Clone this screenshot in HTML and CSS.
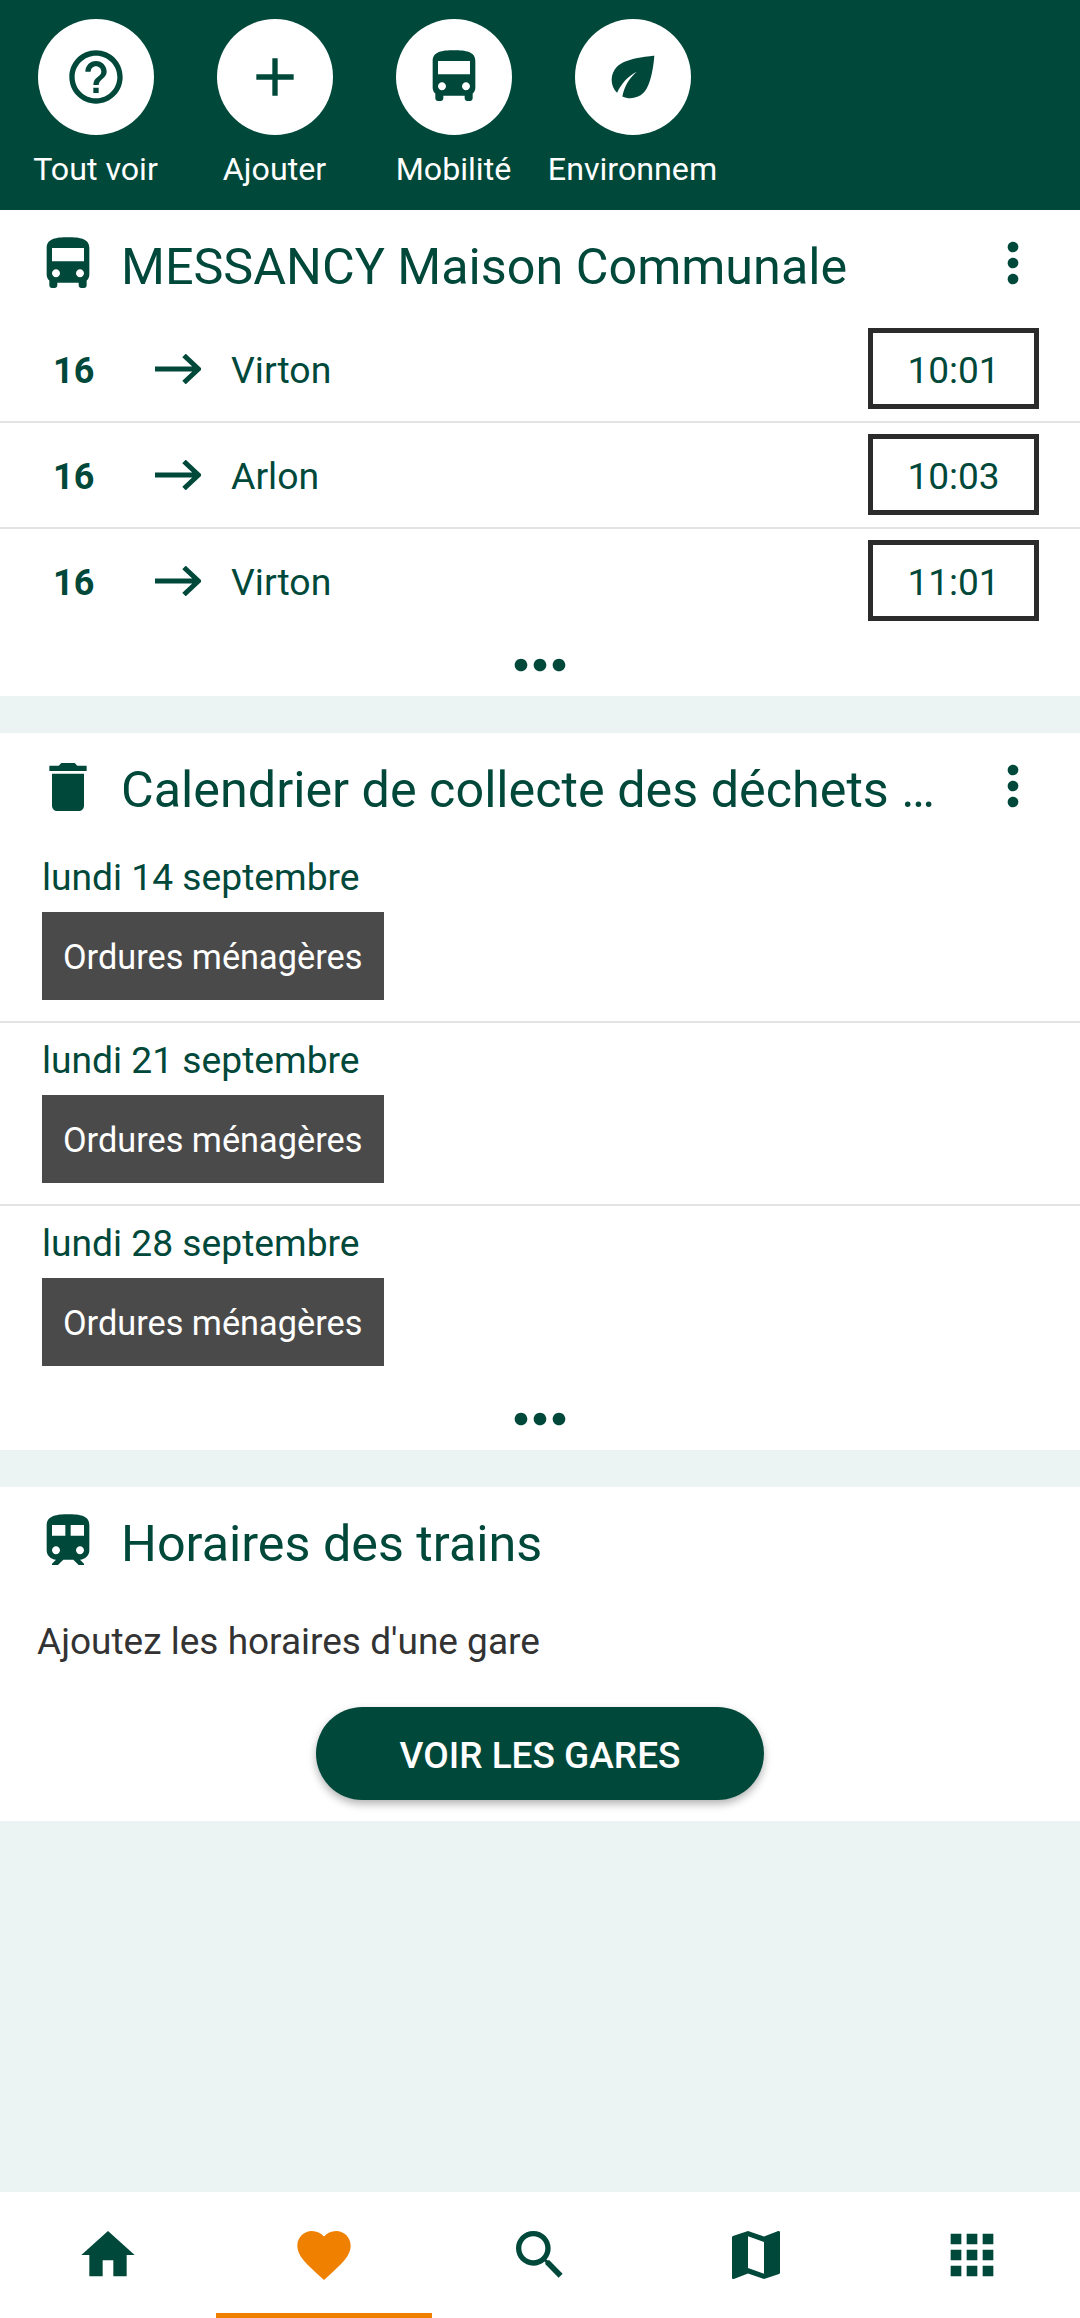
FILE: index.html
```html
<!DOCTYPE html>
<html lang="fr">
<head>
<meta charset="utf-8">
<title>Favoris</title>
<link rel="stylesheet" href="styles.css">
</head>
<body>
<div class="app">
  <header class="shortcuts">
    <div class="shortcut"><div class="circle"><svg class="icon" viewBox="0 0 24 24"><path d="M11 18h2v-2h-2v2zm1-16C6.48 2 2 6.48 2 12s4.48 10 10 10 10-4.48 10-10S17.52 2 12 2zm0 18c-4.41 0-8-3.59-8-8s3.59-8 8-8 8 3.59 8 8-3.59 8-8 8zm0-14c-2.21 0-4 1.79-4 4h2c0-1.1.9-2 2-2s2 .9 2 2c0 2-3 1.75-3 5h2c0-2.25 3-2.5 3-5 0-2.21-1.79-4-4-4z"/></svg></div><span class="shortcut-label">Tout voir</span></div>
    <div class="shortcut"><div class="circle"><svg class="icon" viewBox="0 0 24 24"><path d="M19 13h-6v6h-2v-6H5v-2h6V5h2v6h6v2z"/></svg></div><span class="shortcut-label">Ajouter</span></div>
    <div class="shortcut"><div class="circle"><svg class="icon" viewBox="0 0 24 24"><path d="M4 16c0 .88.39 1.67 1 2.22V20c0 .55.45 1 1 1h1c.55 0 1-.45 1-1v-1h8v1c0 .55.45 1 1 1h1c.55 0 1-.45 1-1v-1.78c.61-.55 1-1.34 1-2.22V6c0-3.5-3.58-4-8-4s-8 .5-8 4v10zm3.5 1c-.83 0-1.5-.67-1.5-1.5S6.67 14 7.5 14s1.5.67 1.5 1.5S8.33 17 7.5 17zm9 0c-.83 0-1.5-.67-1.5-1.5s.67-1.5 1.5-1.5 1.5.67 1.5 1.5-.67 1.5-1.5 1.5zm1.5-6H6V6h12v5z"/></svg></div><span class="shortcut-label">Mobilité</span></div>
    <div class="shortcut"><div class="circle"><svg class="icon" viewBox="0 0 24 24"><path d="M6.05 8.05c-2.73 2.73-2.73 7.15-.02 9.88 1.47-3.4 4.09-6.24 7.36-7.93-2.77 2.34-4.71 5.61-5.39 9.32 2.6 1.23 5.8.78 7.95-1.37C19.43 14.47 20 4 20 4S9.53 4.57 6.05 8.05z"/></svg></div><span class="shortcut-label">Environnem</span></div>
  </header>

  <main class="content">
    <section class="card">
      <div class="card-head">
        <svg class="icon" viewBox="0 0 24 24"><path d="M4 16c0 .88.39 1.67 1 2.22V20c0 .55.45 1 1 1h1c.55 0 1-.45 1-1v-1h8v1c0 .55.45 1 1 1h1c.55 0 1-.45 1-1v-1.78c.61-.55 1-1.34 1-2.22V6c0-3.5-3.58-4-8-4s-8 .5-8 4v10zm3.5 1c-.83 0-1.5-.67-1.5-1.5S6.67 14 7.5 14s1.5.67 1.5 1.5S8.33 17 7.5 17zm9 0c-.83 0-1.5-.67-1.5-1.5s.67-1.5 1.5-1.5 1.5.67 1.5 1.5-.67 1.5-1.5 1.5zm1.5-6H6V6h12v5z"/></svg>
        <h2 class="card-title">MESSANCY Maison Communale</h2>
        <svg class="icon menu" viewBox="0 0 24 24"><path d="M12 8c1.1 0 2-.9 2-2s-.9-2-2-2-2 .9-2 2 .9 2 2 2zm0 2c-1.1 0-2 .9-2 2s.9 2 2 2 2-.9 2-2-.9-2-2-2zm0 6c-1.1 0-2 .9-2 2s.9 2 2 2 2-.9 2-2-.9-2-2-2z"/></svg>
      </div>
      <div class="bus-row">
        <span class="line">16</span>
        <svg class="arrow" viewBox="0 0 46 30"><path d="M0 15H43M29 1.5L43.5 15L29 28.5"/></svg>
        <span class="dest">Virton</span>
        <span class="time">10:01</span>
      </div>
      <div class="bus-row">
        <span class="line">16</span>
        <svg class="arrow" viewBox="0 0 46 30"><path d="M0 15H43M29 1.5L43.5 15L29 28.5"/></svg>
        <span class="dest">Arlon</span>
        <span class="time">10:03</span>
      </div>
      <div class="bus-row">
        <span class="line">16</span>
        <svg class="arrow" viewBox="0 0 46 30"><path d="M0 15H43M29 1.5L43.5 15L29 28.5"/></svg>
        <span class="dest">Virton</span>
        <span class="time">11:01</span>
      </div>
      <div class="more"><svg class="icon more-icon" viewBox="0 0 24 24"><path d="M6 10c-1.1 0-2 .9-2 2s.9 2 2 2 2-.9 2-2-.9-2-2-2zm12 0c-1.1 0-2 .9-2 2s.9 2 2 2 2-.9 2-2-.9-2-2-2zm-6 0c-1.1 0-2 .9-2 2s.9 2 2 2 2-.9 2-2-.9-2-2-2z"/></svg></div>
    </section>

    <section class="card">
      <div class="card-head">
        <svg class="icon" viewBox="0 0 24 24"><path d="M6 19c0 1.1.9 2 2 2h8c1.1 0 2-.9 2-2V7H6v12zM19 4h-3.5l-1-1h-5l-1 1H5v2h14V4z"/></svg>
        <h2 class="card-title">Calendrier de collecte des déchets …</h2>
        <svg class="icon menu" viewBox="0 0 24 24"><path d="M12 8c1.1 0 2-.9 2-2s-.9-2-2-2-2 .9-2 2 .9 2 2 2zm0 2c-1.1 0-2 .9-2 2s.9 2 2 2 2-.9 2-2-.9-2-2-2zm0 6c-1.1 0-2 .9-2 2s.9 2 2 2 2-.9 2-2-.9-2-2-2z"/></svg>
      </div>
      <div class="waste-row"><div class="date">lundi 14 septembre</div><span class="chip">Ordures ménagères</span></div>
      <div class="waste-row"><div class="date">lundi 21 septembre</div><span class="chip">Ordures ménagères</span></div>
      <div class="waste-row"><div class="date">lundi 28 septembre</div><span class="chip">Ordures ménagères</span></div>
      <div class="more"><svg class="icon more-icon" viewBox="0 0 24 24"><path d="M6 10c-1.1 0-2 .9-2 2s.9 2 2 2 2-.9 2-2-.9-2-2-2zm12 0c-1.1 0-2 .9-2 2s.9 2 2 2 2-.9 2-2-.9-2-2-2zm-6 0c-1.1 0-2 .9-2 2s.9 2 2 2 2-.9 2-2-.9-2-2-2z"/></svg></div>
    </section>

    <section class="card">
      <div class="card-head">
        <svg class="icon" viewBox="0 0 24 24"><path d="M12 2c-4 0-8 .5-8 4v9.5C4 17.43 5.57 19 7.5 19L6 20.5v.5h2.23l2-2H14l2 2h2v-.5L16.5 19c1.93 0 3.5-1.57 3.5-3.5V6c0-3.5-3.58-4-8-4zM7.5 17c-.83 0-1.5-.67-1.5-1.5S6.67 14 7.5 14s1.5.67 1.5 1.5S8.33 17 7.5 17zm3.5-7H6V6h5v4zm2 0V6h5v4h-5zm3.5 7c-.83 0-1.5-.67-1.5-1.5s.67-1.5 1.5-1.5 1.5.67 1.5 1.5-.67 1.5-1.5 1.5z"/></svg>
        <h2 class="card-title">Horaires des trains</h2>
      </div>
      <p class="hint">Ajoutez les horaires d'une gare</p>
      <div class="cta-wrap"><button class="cta">VOIR LES GARES</button></div>
    </section>
  </main>

  <nav class="tabs">
    <div class="tab"><svg class="icon" viewBox="0 0 24 24"><path d="M10 20v-6h4v6h5v-8h3L12 3 2 12h3v8z"/></svg></div>
    <div class="tab tab-active"><svg class="icon" viewBox="0 0 24 24"><path d="M12 21.35l-1.45-1.32C5.4 15.36 2 12.28 2 8.5 2 5.42 4.42 3 7.5 3c1.74 0 3.41.81 4.5 2.09C13.09 3.81 14.76 3 16.5 3 19.58 3 22 5.42 22 8.5c0 3.78-3.4 6.86-8.55 11.54L12 21.35z"/></svg></div>
    <div class="tab"><svg class="icon" viewBox="0 0 24 24"><path d="M15.5 14h-.79l-.28-.27C15.41 12.59 16 11.11 16 9.5 16 5.91 13.09 3 9.5 3S3 5.91 3 9.5 5.91 16 9.5 16c1.61 0 3.09-.59 4.23-1.57l.27.28v.79l5 4.99L20.49 19l-4.99-5zm-6 0C7.01 14 5 11.99 5 9.5S7.01 5 9.5 5 14 7.01 14 9.5 11.99 14 9.5 14z"/></svg></div>
    <div class="tab"><svg class="icon" viewBox="0 0 24 24"><path d="M20.5 3l-.16.03L15 5.1 9 3 3.36 4.9c-.21.07-.36.25-.36.48V20.5c0 .28.22.5.5.5l.16-.03L9 18.9l6 2.1 5.64-1.9c.21-.07.36-.25.36-.48V3.5c0-.28-.22-.5-.5-.5zM15 19l-6-2.11V5l6 2.11V19z"/></svg></div>
    <div class="tab"><svg class="icon" viewBox="0 0 24 24"><path d="M4 8h4V4H4v4zm6 12h4v-4h-4v4zm-6 0h4v-4H4v4zm0-6h4v-4H4v4zm6 0h4v-4h-4v4zm6-10v4h4V4h-4zm-6 4h4V4h-4v4zm6 6h4v-4h-4v4zm0 6h4v-4h-4v4z"/></svg></div>
  </nav>
</div>
</body>
</html>
```
FILE: styles.css
```css
* { box-sizing: border-box; }
html, body { margin: 0; padding: 0; }
body { font-family: Roboto, "Liberation Sans", sans-serif; color: #00483a; background: #ebf4f2; }
.app { display: flex; flex-direction: column; height: 2318px; overflow: hidden; }
.icon { width: 64px; height: 64px; fill: #00483a; display: block; flex: none; }

.shortcuts { height: 210px; background: #00483a; display: flex; padding: 19px 0 0 6px; flex: none; }
.shortcut { width: 179px; display: flex; flex-direction: column; align-items: center; }
.circle { width: 116px; height: 116px; border-radius: 50%; background: #fff; display: flex; align-items: center; justify-content: center; }
.shortcut-label { color: #fff; font-size: 32.2px; line-height: 40px; margin-top: 14px; white-space: nowrap; }

.content { flex: 1; display: flex; flex-direction: column; gap: 37px; }
.card { background: #fff; }
.card-head { height: 107px; display: flex; align-items: center; padding: 0 36px; }
.card-title { margin: 0 0 0 21px; font-size: 50.3px; font-weight: 400; line-height: 60px; flex: 1; white-space: nowrap; padding-top: 6px; }
.menu { margin-right: -1px; position: relative; top: -1px; }

.bus-row { height: 106px; display: flex; align-items: center; padding: 0 41px 0 0; border-bottom: 2px solid #e3e3e3; }
.bus-row:nth-of-type(4) { height: 104px; border-bottom: 0; }
.line { width: 155px; padding: 3px 0 0 53px; font-size: 36px; font-weight: 700; }
.arrow { width: 46px; height: 30px; fill: none; stroke: #00483a; stroke-width: 5; flex: none; }
.dest { margin-left: 30px; padding-top: 2px; font-size: 37.4px; flex: 1; }
.time { width: 171px; height: 81px; border: 5px solid #2b2b2b; margin-top: -1px; padding-top: 4px; display: flex; align-items: center; justify-content: center; font-size: 37px; }

.more { height: 63px; display: flex; align-items: center; justify-content: center; }
.more-icon { width: 76px; height: 76px; margin: -7px 0; }

.waste-row { padding: 12px 42px 21px; border-bottom: 2px solid #e3e3e3; }
.waste-row:nth-of-type(4) { border-bottom: 0; }
.date { font-size: 37.2px; line-height: 50px; margin-bottom: 10px; }
.chip { display: flex; align-items: center; width: 342px; height: 88px; padding: 2px 21px 0; background: #4a4a4a; color: #fff; font-size: 34.3px; white-space: nowrap; }

.hint { margin: 23px 0 0; padding: 0 37px; font-size: 37px; line-height: 50px; color: #333; }
.cta-wrap { display: flex; justify-content: center; padding: 40px 0 21px; }
.cta { width: 448px; height: 93px; padding-top: 4px; border: 0; border-radius: 47px; background: #00483a; color: #fff; font-family: inherit; font-size: 37px; font-weight: 500; box-shadow: 0 4px 8px rgba(0,0,0,.3); }

.tabs { height: 126px; background: #fff; display: flex; flex: none; }
.tab { flex: 1; display: flex; justify-content: center; padding-top: 31px; }
.tab-active { border-bottom: 5px solid #f08000; }
.tab-active .icon { fill: #f08000; }
```
